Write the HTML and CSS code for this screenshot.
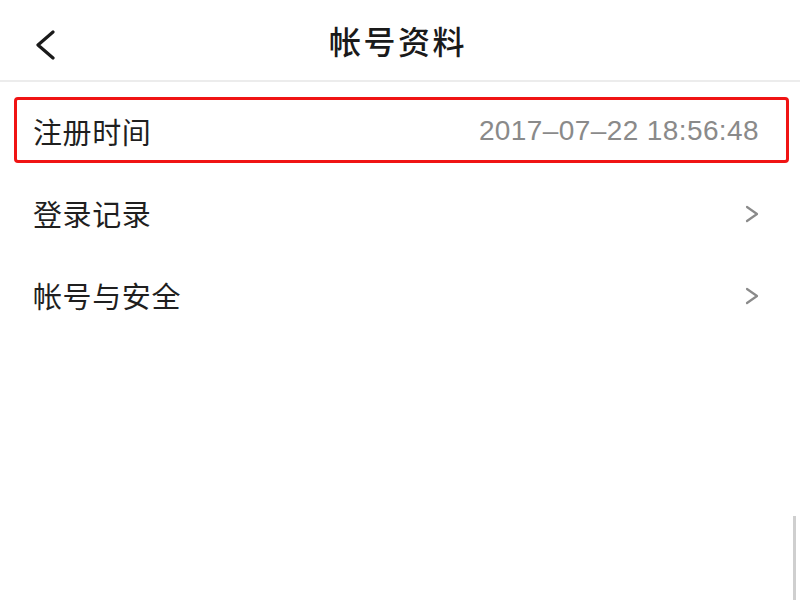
FILE: index.html
```html
<!DOCTYPE html>
<html lang="zh-CN">
<head>
<meta charset="utf-8">
<title>帐号资料</title>
<link rel="stylesheet" href="styles.css">
</head>
<body>
<div class="page">
  <header class="topbar">
    <span class="back">
      <svg width="24" height="30" viewBox="0 0 24 30"><path d="M20 2 L5 15 L20 28" fill="none" stroke="#1a1a1a" stroke-width="3.2" stroke-linecap="round" stroke-linejoin="round"/></svg>
    </span>
    <h1 class="title">帐号资料</h1>
  </header>
  <ul class="list">
    <li class="row row-marked">
      <span class="label">注册时间</span>
      <span class="value">2017–07–22 18:56:48</span>
      <span class="mark"></span>
    </li>
    <li class="row">
      <span class="label">登录记录</span>
      <svg class="chev" width="14" height="18" viewBox="0 0 14 18"><path d="M2 2 L12 9 L2 16" fill="none" stroke="#8a8a8a" stroke-width="2.2" stroke-linecap="round" stroke-linejoin="round"/></svg>
    </li>
    <li class="row">
      <span class="label">帐号与安全</span>
      <svg class="chev" width="14" height="18" viewBox="0 0 14 18"><path d="M2 2 L12 9 L2 16" fill="none" stroke="#8a8a8a" stroke-width="2.2" stroke-linecap="round" stroke-linejoin="round"/></svg>
    </li>
  </ul>
  <div class="scroll"></div>
</div>
</body>
</html>
```
FILE: styles.css
```css
html, body {
  margin: 0;
  padding: 0;
  background: #fff;
}
body {
  font-family: "Noto Sans CJK SC", "Noto Sans", sans-serif;
  color: #1f1f1f;
}
.page {
  position: relative;
  width: 800px;
  height: 600px;
  overflow: hidden;
}
.topbar {
  position: relative;
  height: 82px;
  border-bottom: 2px solid #ececec;
  box-sizing: border-box;
  display: flex;
  align-items: center;
  justify-content: center;
}
.back {
  position: absolute;
  left: 33px;
  top: 30px;
  display: flex;
}
.title {
  margin: 0;
  font-size: 32px;
  font-weight: 500;
  letter-spacing: 2.5px;
  color: #1a1a1a;
  padding-left: 0;
  margin-right: 4px;
}
.list {
  list-style: none;
  margin: 0;
  padding: 8px 0 0;
}
.row {
  position: relative;
  height: 82px;
  display: flex;
  align-items: center;
  justify-content: space-between;
  padding: 0 41px 0 33px;
}
.label {
  font-size: 29px;
  letter-spacing: 0.6px;
  color: #1f1f1f;
}
.value {
  font-family: "Liberation Sans", "Noto Sans", sans-serif;
  font-size: 28px;
  color: #8a8a8a;
  letter-spacing: 0.4px;
}
.mark {
  position: absolute;
  left: 14px;
  right: 11px;
  top: 7px;
  height: 66px;
  border: 3px solid #f01414;
  border-radius: 4px;
  box-sizing: border-box;
}
.chev {
  display: block;
  margin-top: 2px;
}
.scroll {
  position: absolute;
  right: 4px;
  top: 516px;
  width: 3px;
  height: 84px;
  background: #cfcfcf;
}
```
